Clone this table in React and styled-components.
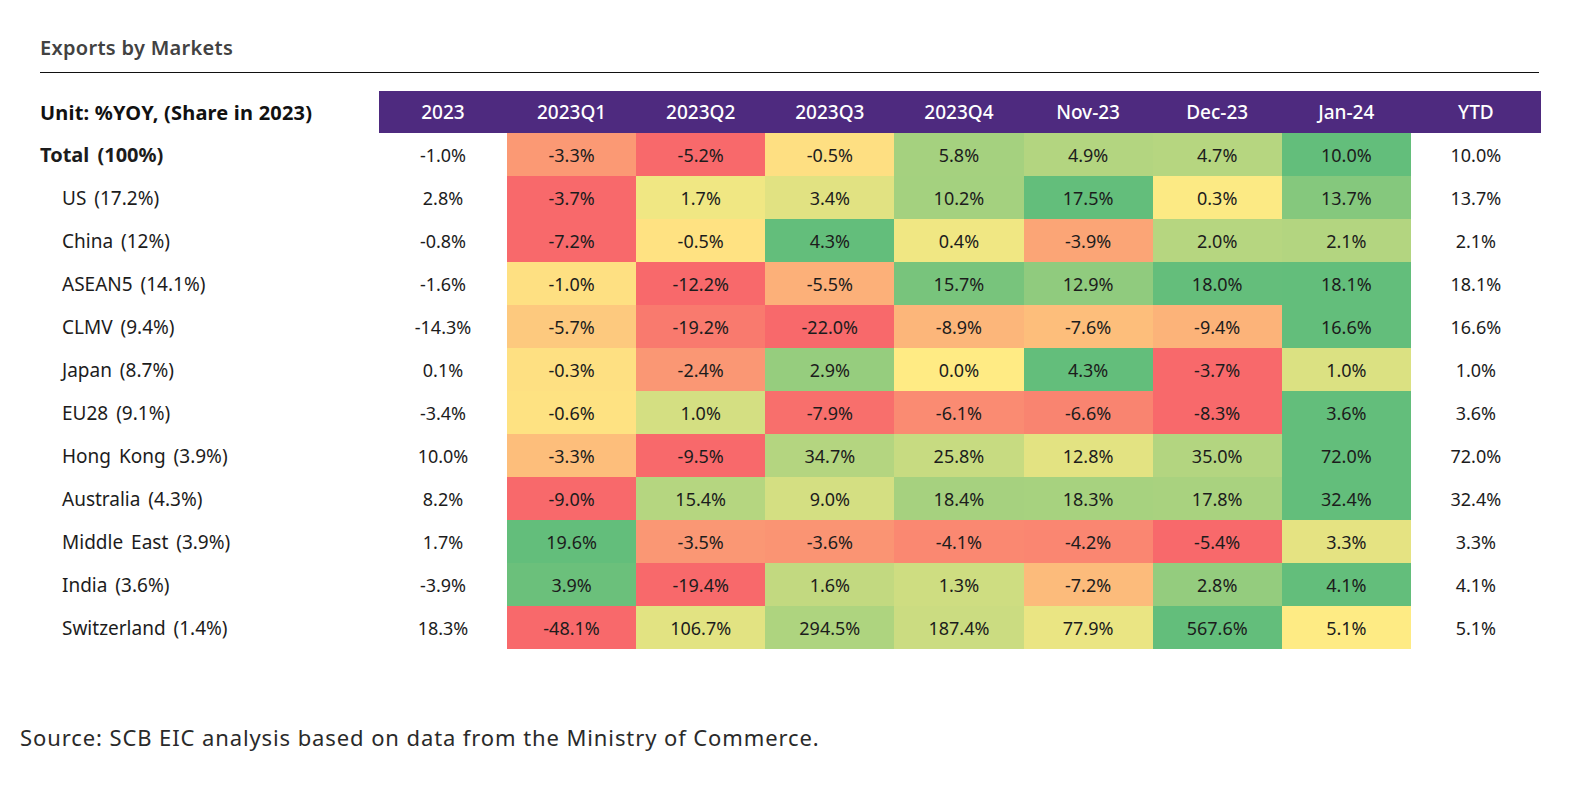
import React from 'react';
import styled, { createGlobalStyle } from 'styled-components';

const GlobalStyle = createGlobalStyle`
	body {
		margin: 0;
		background: #fff;
		font-family: "Noto Sans", "Open Sans", sans-serif;
		color: #1c1c1c;
	}
`;

const RED = [248, 105, 107];
const YELLOW = [255, 235, 132];
const GREEN = [99, 190, 123];

const columns = ['2023', '2023Q1', '2023Q2', '2023Q3', '2023Q4', 'Nov-23', 'Dec-23', 'Jan-24', 'YTD'];

const rows = [
	{ name: 'Total (100%)', total: true, v: [-1.0, -3.3, -5.2, -0.5, 5.8, 4.9, 4.7, 10.0, 10.0] },
	{ name: 'US (17.2%)', v: [2.8, -3.7, 1.7, 3.4, 10.2, 17.5, 0.3, 13.7, 13.7] },
	{ name: 'China (12%)', v: [-0.8, -7.2, -0.5, 4.3, 0.4, -3.9, 2.0, 2.1, 2.1] },
	{ name: 'ASEAN5 (14.1%)', v: [-1.6, -1.0, -12.2, -5.5, 15.7, 12.9, 18.0, 18.1, 18.1] },
	{ name: 'CLMV (9.4%)', v: [-14.3, -5.7, -19.2, -22.0, -8.9, -7.6, -9.4, 16.6, 16.6] },
	{ name: 'Japan (8.7%)', v: [0.1, -0.3, -2.4, 2.9, 0.0, 4.3, -3.7, 1.0, 1.0] },
	{ name: 'EU28 (9.1%)', v: [-3.4, -0.6, 1.0, -7.9, -6.1, -6.6, -8.3, 3.6, 3.6] },
	{ name: 'Hong Kong (3.9%)', v: [10.0, -3.3, -9.5, 34.7, 25.8, 12.8, 35.0, 72.0, 72.0] },
	{ name: 'Australia (4.3%)', v: [8.2, -9.0, 15.4, 9.0, 18.4, 18.3, 17.8, 32.4, 32.4] },
	{ name: 'Middle East (3.9%)', v: [1.7, 19.6, -3.5, -3.6, -4.1, -4.2, -5.4, 3.3, 3.3] },
	{ name: 'India (3.6%)', v: [-3.9, 3.9, -19.4, 1.6, 1.3, -7.2, 2.8, 4.1, 4.1] },
	{ name: 'Switzerland (1.4%)', v: [18.3, -48.1, 106.7, 294.5, 187.4, 77.9, 567.6, 5.1, 5.1] },
];

function mix(a, b, t) {
	const c = a.map((x, i) => Math.round(x + (b[i] - x) * t));
	return `rgb(${c[0]}, ${c[1]}, ${c[2]})`;
}

// excel style red / yellow / green scale, per row, midpoint at zero
function scaleColor(v, min, max) {
	if (v < 0) return mix(YELLOW, RED, min < 0 ? v / min : 0);
	if (v > 0) return mix(YELLOW, GREEN, max > 0 ? v / max : 0);
	return mix(YELLOW, YELLOW, 0);
}

const Wrapper = styled.div`
	padding-left: 40px;
	width: 1501px;
`;

const Title = styled.div`
	margin-top: 34px;
	padding-bottom: 10px;
	line-height: 28px;
	font-size: 20px;
	font-weight: 600;
	letter-spacing: 0.3px;
	color: #424242;
	border-bottom: 1px solid #111;
	width: 1499px;
`;

const Table = styled.div`
	margin-top: 18px;
	display: grid;
	grid-template-columns: 339px 128px repeat(7, 129.14px) 130px;
`;

const UnitLabel = styled.div`
	height: 42px;
	display: flex;
	align-items: center;
	font-size: 20px;
	font-weight: 700;
	letter-spacing: 0.2px;
	color: #111;
`;

const HeadCell = styled.div`
	height: 42px;
	display: flex;
	align-items: center;
	justify-content: center;
	background: #4e2a7f;
	color: #fff;
	font-size: 19px;
	font-weight: 500;
`;

const RowLabel = styled.div`
	height: 43px;
	display: flex;
	align-items: center;
	padding-left: ${p => (p.$total ? '0' : '22px')};
	font-size: ${p => (p.$total ? '20px' : '19px')};
	font-weight: ${p => (p.$total ? 700 : 400)};
	color: #1c1c1c;
	word-spacing: 3px;
`;

const Cell = styled.div`
	height: 43px;
	display: flex;
	align-items: center;
	justify-content: center;
	font-size: 18px;
	color: #1c1c1c;
	background: ${p => p.$bg || 'transparent'};
`;

const Source = styled.div`
	margin-top: 73px;
	padding-left: 20px;
	line-height: 30px;
	font-size: 22px;
	letter-spacing: 0.9px;
	color: #2a2a2a;
`;

function fmt(v) {
	return `${v.toFixed(1)}%`;
}

export default function App() {
	return (
		<>
			<GlobalStyle />
			<Wrapper>
				<Title>Exports by Markets</Title>
				<Table>
					<UnitLabel>Unit: %YOY, (Share in 2023)</UnitLabel>
					{columns.map(c => (
						<HeadCell key={c}>{c}</HeadCell>
					))}
					{rows.map(row => {
						const scaled = row.v.slice(1, 8);
						const min = Math.min(...scaled);
						const max = Math.max(...scaled);
						return (
							<React.Fragment key={row.name}>
								<RowLabel $total={row.total}>{row.name}</RowLabel>
								{row.v.map((v, i) => (
									<Cell key={i} $bg={i > 0 && i < 8 ? scaleColor(v, min, max) : null}>
										{fmt(v)}
									</Cell>
								))}
							</React.Fragment>
						);
					})}
				</Table>
			</Wrapper>
			<Source>Source: SCB EIC analysis based on data from the Ministry of Commerce.</Source>
		</>
	);
}
